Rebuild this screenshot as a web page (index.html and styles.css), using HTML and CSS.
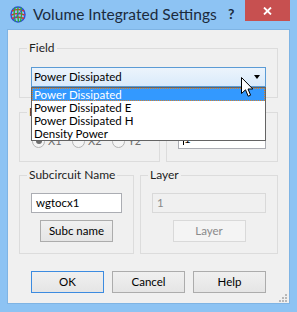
FILE: index.html
```html
<!DOCTYPE html>
<html lang="en">
<head>
<meta charset="UTF-8" />
<title>Volume Integrated Settings</title>
<link rel="stylesheet" href="styles.css">
</head>
<body>
<div class="window">
  <div class="titlebar">
    <svg class="app-icon" width="16" height="17" viewBox="0 0 16 17">
      <ellipse cx="8" cy="8.5" rx="7" ry="7.5" fill="none" stroke="#2a4fd8" stroke-width="1.5"/>
      <path d="M2 5 Q8 2 14 5 M1.5 9 Q8 6 14.5 9 M2 12.5 Q8 10 14 12.5" fill="none" stroke="#d83030" stroke-width="1.4"/>
      <path d="M5 1.5 Q3 8.5 5.5 15.5 M8 1 Q7 8.5 8.5 16 M11 1.5 Q12.5 8.5 10.5 15.5" fill="none" stroke="#2fa83a" stroke-width="1.4"/>
      <path d="M3 14 L13 3" stroke="#3050e0" stroke-width="1"/>
    </svg>
    <span class="title">Volume Integrated Settings</span>
    <span class="help-mark">?</span>
    <div class="close">
      <svg width="9" height="8" viewBox="0 0 9 8">
        <path d="M1 0.5 L8 7.5 M8 0.5 L1 7.5" stroke="#fff" stroke-width="1.8"/>
      </svg>
    </div>
  </div>

  <div class="client">
    <div class="group field-group">
      <span class="group-title">Field</span>
      <div class="combo">
        <span>Power Dissipated</span>
        <span class="arrow"></span>
      </div>
      <ul class="dropdown">
        <li class="selected">Power Dissipated</li>
        <li>Power Dissipated E</li>
        <li>Power Dissipated H</li>
        <li>Density Power</li>
      </ul>
    </div>

    <div class="row row-two">
      <div class="group plane-group">
        <span class="group-title">Plane</span>
        <div class="radios">
          <label class="radio"><span class="dot checked"></span>X1</label>
          <label class="radio"><span class="dot"></span>X2</label>
          <label class="radio"><span class="dot"></span>Y2</label>
        </div>
      </div>
      <div class="group value-group">
        <span class="group-title">Value</span>
        <div class="textbox value-box"><span class="caret"></span>1</div>
      </div>
    </div>

    <div class="row row-three">
      <div class="group subc-group">
        <span class="group-title">Subcircuit Name</span>
        <div class="textbox subc-box">wgtocx1</div>
        <div class="button">Subc name</div>
      </div>
      <div class="group layer-group">
        <span class="group-title">Layer</span>
        <div class="textbox layer-box disabled">1</div>
        <div class="button disabled">Layer</div>
      </div>
    </div>

    <div class="buttons">
      <div class="button default">OK</div>
      <div class="button">Cancel</div>
      <div class="button">Help</div>
    </div>

    <svg class="grip" width="8" height="8" viewBox="0 0 8 8">
      <rect x="6" y="0" width="2" height="2" fill="#b8b8b8"/>
      <rect x="3" y="3" width="2" height="2" fill="#b8b8b8"/>
      <rect x="6" y="3" width="2" height="2" fill="#b8b8b8"/>
      <rect x="0" y="6" width="2" height="2" fill="#b8b8b8"/>
      <rect x="3" y="6" width="2" height="2" fill="#b8b8b8"/>
      <rect x="6" y="6" width="2" height="2" fill="#b8b8b8"/>
    </svg>
  </div>

  <svg class="cursor" width="13" height="21" viewBox="0 0 13 21">
    <path d="M0.5 0.5 L0.5 16.5 L4.5 12.8 L7.2 19.2 L9.6 18.2 L7 12 L11.8 12 Z" fill="#fff" stroke="#000" stroke-width="1"/>
  </svg>
</div>
</body>
</html>
```

FILE: styles.css
```css
* {
  box-sizing: border-box;
}

body {
  margin: 0;
  font-family: Lato, "Liberation Sans", sans-serif;
  font-size: 11px;
  color: #000;
}

.window {
  position: relative;
  width: 297px;
  height: 312px;
  background: #8dc3f3;
  overflow: hidden;
}

.titlebar {
  height: 29px;
  display: flex;
  align-items: flex-start;
}

.app-icon {
  margin: 6px 0 0 10px;
}

.title {
  margin: 5px 0 0 7px;
  font-size: 15.5px;
  color: #1b2a3c;
  width: 195px;
  white-space: nowrap;
}

.help-mark {
  margin: 5px 0 0 0;
  font-size: 14px;
  font-weight: bold;
  color: #1b2a3c;
}

.close {
  margin-left: auto;
  width: 45px;
  height: 21px;
  margin-right: 7px;
  background: #c75050;
  display: flex;
  align-items: center;
  justify-content: center;
}

.client {
  position: relative;
  margin: 0 7px 0 7px;
  height: 275px;
  border: 1px solid #7fb4e4;
  background: #f0f0f0;
  padding: 18px 11px 0 11px;
}

.group {
  position: relative;
  border: 1px solid #dcdcdc;
}

.group-title {
  position: absolute;
  top: -8px;
  left: 7px;
  padding: 0 2px;
  background: #f0f0f0;
  line-height: 14px;
  font-size: 12px;
  color: #1e1e1e;
}

.field-group {
  height: 50px;
  padding: 18px 11px 0 11px;
  z-index: 2;
}

.combo {
  height: 20px;
  border: 1px solid #5b9bd5;
  background: linear-gradient(#ecf4fc, #d9eafb);
  display: flex;
  align-items: center;
  padding: 0 0 0 2px;
  line-height: 16px;
  font-size: 11.5px;
}

.arrow {
  margin-left: auto;
  margin-right: 5px;
  width: 0;
  height: 0;
  border-left: 3.5px solid transparent;
  border-right: 3.5px solid transparent;
  border-top: 4px solid #000;
}

.dropdown {
  position: absolute;
  top: 38px;
  left: 11px;
  width: 235px;
  margin: 0;
  padding: 0;
  list-style: none;
  background: #fff;
  border: 1px solid #646464;
  font-size: 11.5px;
}

.dropdown li {
  height: 13px;
  line-height: 13px;
  padding-left: 2px;
  white-space: nowrap;
}

.dropdown li.selected {
  background: #3399ff;
  color: #fff;
  outline: 1px dotted #d9822b;
  outline-offset: -1px;
}

.row {
  display: flex;
  gap: 6px;
}

.row-two {
  margin-top: 14px;
}

.row-two .group {
  height: 50px;
}

.plane-group {
  width: 141px;
  padding: 20px 0 0 12px;
}

.radios {
  display: flex;
}

.radio {
  display: flex;
  align-items: center;
  width: 40px;
  color: #6d6d6d;
  line-height: 16px;
}

.dot {
  width: 13px;
  height: 13px;
  border-radius: 50%;
  border: 1px solid #b4b4b4;
  background: #f4f4f4;
  margin-right: 3px;
  position: relative;
}

.dot.checked::after {
  content: "";
  position: absolute;
  left: 2.5px;
  top: 2.5px;
  width: 6px;
  height: 6px;
  border-radius: 50%;
  background: #6d6d6d;
}

.value-group {
  width: 112px;
  padding: 16px 11px 0 11px;
}

.textbox {
  height: 20px;
  border: 1px solid #abadb3;
  background: #fff;
  padding: 0 4px;
  line-height: 18px;
  font-size: 11.5px;
}

.caret {
  display: inline-block;
  width: 1px;
  height: 12px;
  background: #000;
  vertical-align: -2px;
}

.textbox.disabled {
  background: #f0f0f0;
  border-color: #d9d9d9;
  color: #8a8a8a;
}

.row-three {
  margin-top: 13px;
}

.row-three .group {
  height: 79px;
  padding: 17px 11px 0 11px;
  display: flex;
  flex-direction: column;
  align-items: center;
}

.row-three .textbox {
  width: 100%;
}

.subc-group {
  width: 115px;
}

.layer-group {
  width: 138px;
}

.button {
  width: 73px;
  height: 22px;
  border: 1px solid #acacac;
  background: linear-gradient(#f0f0f0, #e5e5e5);
  display: flex;
  align-items: center;
  justify-content: center;
  line-height: 16px;
  font-size: 11.5px;
}

.row-three .button {
  margin-top: 7px;
}

.button.disabled {
  border-color: #d9d9d9;
  background: #f4f4f4;
  color: #8a8a8a;
}

.button.default {
  border-color: #3c8be0;
}

.buttons {
  display: flex;
  gap: 8px;
  margin: 17px 0 0 12px;
}

.grip {
  position: absolute;
  right: 2px;
  bottom: 1px;
}

.cursor {
  position: absolute;
  left: 241px;
  top: 77px;
  z-index: 5;
}
```
